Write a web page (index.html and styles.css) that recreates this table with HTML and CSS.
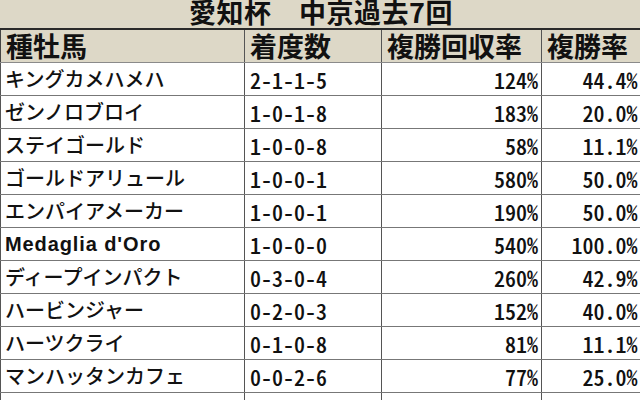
FILE: index.html
```html
<!DOCTYPE html>
<html lang="ja">
<head>
<meta charset="utf-8">
<title>愛知杯 中京過去7回</title>
<link rel="stylesheet" href="styles.css">
</head>
<body>
<div class="title">愛知杯　中京過去7回</div>
<table class="tbl">
  <colgroup>
    <col class="c1"><col class="c2"><col class="c3"><col class="c4">
  </colgroup>
  <thead>
    <tr><th>種牡馬</th><th>着度数</th><th>複勝回収率</th><th>複勝率</th></tr>
  </thead>
  <tbody>
    <tr><td class="name">キングカメハメハ</td><td class="rec">2-1-1-5</td><td class="num">124%</td><td class="num">44.4%</td></tr>
    <tr><td class="name">ゼンノロブロイ</td><td class="rec">1-0-1-8</td><td class="num">183%</td><td class="num">20.0%</td></tr>
    <tr><td class="name">ステイゴールド</td><td class="rec">1-0-0-8</td><td class="num">58%</td><td class="num">11.1%</td></tr>
    <tr><td class="name">ゴールドアリュール</td><td class="rec">1-0-0-1</td><td class="num">580%</td><td class="num">50.0%</td></tr>
    <tr><td class="name">エンパイアメーカー</td><td class="rec">1-0-0-1</td><td class="num">190%</td><td class="num">50.0%</td></tr>
    <tr><td class="name latin">Medaglia d'Oro</td><td class="rec">1-0-0-0</td><td class="num">540%</td><td class="num">100.0%</td></tr>
    <tr><td class="name">ディープインパクト</td><td class="rec">0-3-0-4</td><td class="num">260%</td><td class="num">42.9%</td></tr>
    <tr><td class="name">ハービンジャー</td><td class="rec">0-2-0-3</td><td class="num">152%</td><td class="num">40.0%</td></tr>
    <tr><td class="name">ハーツクライ</td><td class="rec">0-1-0-8</td><td class="num">81%</td><td class="num">11.1%</td></tr>
    <tr><td class="name">マンハッタンカフェ</td><td class="rec">0-0-2-6</td><td class="num">77%</td><td class="num">25.0%</td></tr>
    <tr class="cut"><td class="name"></td><td class="rec"></td><td class="num"></td><td class="num"></td></tr>
  </tbody>
</table>
</body>
</html>
```
FILE: styles.css
```css
html, body {
  margin: 0;
  padding: 0;
  background: #ffffff;
}
body {
  width: 640px;
  height: 400px;
  overflow: hidden;
  font-family: "Noto Sans CJK JP", "Noto Sans", sans-serif;
  color: #111111;
}
.title {
  height: 28px;
  background: #ddd8c7;
  text-align: center;
  font-size: 27px;
  line-height: 23px;
  font-weight: 700;
  letter-spacing: 0.5px;
  overflow: hidden;
  padding-left: 2px;
}
.tbl {
  width: 640px;
  border-collapse: collapse;
  table-layout: fixed;
}
.c1 { width: 244px; }
.c2 { width: 137px; }
.c3 { width: 160px; }
.c4 { width: 99px; }
.tbl th {
  background: #ddd8c7;
  height: 32px;
  padding: 0 0 0 5px;
  text-align: left;
  font-size: 27px;
  font-weight: 700;
  line-height: 32px;
  border-top: 2px solid #2a2a2a;
  border-bottom: 1px solid #8a8a8a;
  border-left: 1px solid #555555;
  white-space: nowrap;
}
.tbl th:first-child { border-left: 1px solid #444444; }
.tbl td {
  height: 32px;
  padding: 0 4px 0 5px;
  font-size: 20px;
  line-height: 32px;
  font-weight: 500;
  border-bottom: 1px solid #777777;
  border-left: 1px solid #555555;
  white-space: nowrap;
  overflow: hidden;
}
.tbl tr.cut td {
  height: 9px;
  line-height: 9px;
  border-bottom: none;
}
.tbl td.name { padding-left: 4px; }
.tbl td.latin {
  font-family: "Liberation Sans", "Noto Sans CJK JP", sans-serif;
  font-weight: bold;
  letter-spacing: 0.9px;
}
.tbl td.rec,
.tbl td.num {
  font-family: "Noto Sans CJK JP", sans-serif;
  font-feature-settings: "hwid" 1;
  font-size: 22px;
  font-weight: 500;
}
.tbl td.num {
  text-align: right;
  padding-right: 3px;
}
```
